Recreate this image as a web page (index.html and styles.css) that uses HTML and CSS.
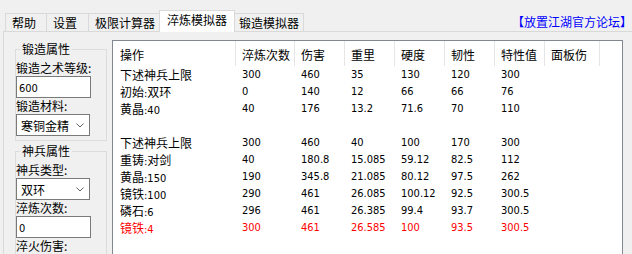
FILE: index.html
```html
<!DOCTYPE html>
<html lang="zh-CN">
<head>
<meta charset="utf-8">
<title>淬炼模拟器</title>
<link rel="stylesheet" href="styles.css">
</head>
<body>
<div class="tabbar">
  <div class="tabs">
    <div class="tab tab-help">帮助</div>
    <div class="tab tab-settings">设置</div>
    <div class="tab tab-limit">极限计算器</div>
    <div class="tab tab-active">淬炼模拟器</div>
    <div class="tab tab-forge">锻造模拟器</div>
  </div>
  <a class="forum-link">【放置江湖官方论坛】</a>
</div>
<div class="pane">
  <div class="side">
    <fieldset class="group">
      <legend>锻造属性</legend>
      <div class="label">锻造之术等级:</div>
      <div class="field"><span class="n">600</span></div>
      <div class="label">锻造材料:</div>
      <div class="select"><span>寒铜金精</span><svg class="chev" width="8" height="5" viewBox="0 0 8 5"><polyline points="0.5,0.5 4,4 7.5,0.5" fill="none" stroke="#606060" stroke-width="1"/></svg></div>
    </fieldset>
    <fieldset class="group">
      <legend>神兵属性</legend>
      <div class="label">神兵类型:</div>
      <div class="select"><span>双环</span><svg class="chev" width="8" height="5" viewBox="0 0 8 5"><polyline points="0.5,0.5 4,4 7.5,0.5" fill="none" stroke="#606060" stroke-width="1"/></svg></div>
      <div class="label">淬炼次数:</div>
      <div class="field"><span class="n">0</span></div>
      <div class="label">淬火伤害:</div>
      <div class="field"></div>
    </fieldset>
  </div>
  <div class="listbox">
    <div class="row head">
      <div class="cell">操作</div>
      <div class="cell">淬炼次数</div>
      <div class="cell">伤害</div>
      <div class="cell">重里</div>
      <div class="cell">硬度</div>
      <div class="cell">韧性</div>
      <div class="cell">特性值</div>
      <div class="cell">面板伤</div>
    </div>
    <div class="row">
      <div class="cell">下述神兵上限</div>
      <div class="cell n">300</div><div class="cell n">460</div><div class="cell n">35</div><div class="cell n">130</div><div class="cell n">120</div><div class="cell n">300</div><div class="cell"></div>
    </div>
    <div class="row">
      <div class="cell">初始<span class="n">:</span>双环</div>
      <div class="cell n">0</div><div class="cell n">140</div><div class="cell n">12</div><div class="cell n">66</div><div class="cell n">66</div><div class="cell n">76</div><div class="cell"></div>
    </div>
    <div class="row">
      <div class="cell">黄晶<span class="n">:40</span></div>
      <div class="cell n">40</div><div class="cell n">176</div><div class="cell n">13.2</div><div class="cell n">71.6</div><div class="cell n">70</div><div class="cell n">110</div><div class="cell"></div>
    </div>
    <div class="row">
      <div class="cell"></div>
    </div>
    <div class="row">
      <div class="cell">下述神兵上限</div>
      <div class="cell n">300</div><div class="cell n">460</div><div class="cell n">40</div><div class="cell n">100</div><div class="cell n">170</div><div class="cell n">300</div><div class="cell"></div>
    </div>
    <div class="row">
      <div class="cell">重铸<span class="n">:</span>对剑</div>
      <div class="cell n">40</div><div class="cell n">180.8</div><div class="cell n">15.085</div><div class="cell n">59.12</div><div class="cell n">82.5</div><div class="cell n">112</div><div class="cell"></div>
    </div>
    <div class="row">
      <div class="cell">黄晶<span class="n">:150</span></div>
      <div class="cell n">190</div><div class="cell n">345.8</div><div class="cell n">21.085</div><div class="cell n">80.12</div><div class="cell n">97.5</div><div class="cell n">262</div><div class="cell"></div>
    </div>
    <div class="row">
      <div class="cell">镜铁<span class="n">:100</span></div>
      <div class="cell n">290</div><div class="cell n">461</div><div class="cell n">26.085</div><div class="cell n">100.12</div><div class="cell n">92.5</div><div class="cell n">300.5</div><div class="cell"></div>
    </div>
    <div class="row">
      <div class="cell">磷石<span class="n">:6</span></div>
      <div class="cell n">296</div><div class="cell n">461</div><div class="cell n">26.385</div><div class="cell n">99.4</div><div class="cell n">93.7</div><div class="cell n">300.5</div><div class="cell"></div>
    </div>
    <div class="row row-last">
      <div class="cell">镜铁<span class="n">:4</span></div>
      <div class="cell n">300</div><div class="cell n">461</div><div class="cell n">26.585</div><div class="cell n">100</div><div class="cell n">93.5</div><div class="cell n">300.5</div><div class="cell"></div>
    </div>
  </div>
</div>
</body>
</html>
```
FILE: styles.css
```css
* { box-sizing: border-box; }
html, body { margin: 0; padding: 0; }
body {
  width: 632px;
  height: 254px;
  overflow: hidden;
  background: #f0f0f0;
  font-family: "Noto Sans CJK SC", sans-serif;
  font-size: 12px;
  color: #000;
}
.n {
  font-family: "DejaVu Sans Condensed", "DejaVu Sans", sans-serif;
  font-size: 11px;
}

/* tab strip */
.tabbar {
  height: 31px;
  display: flex;
  justify-content: space-between;
  align-items: flex-end;
  padding-left: 5px;
}
.tabs { display: flex; align-items: flex-end; }
.tab {
  height: 18px;
  line-height: 17px;
  padding-left: 6px;
  border: 1px solid #d9d9d9;
  border-bottom: none;
  margin-right: -1px;
  background: #f0f0f0;
  white-space: nowrap;
}
.tab-help { width: 42px; }
.tab-settings { width: 43px; }
.tab-limit { width: 74px; }
.tab-active {
  width: 76px;
  height: 22px;
  line-height: 16px;
  padding-top: 1px;
  padding-left: 7px;
  margin-left: -2px;
  margin-right: -3px;
  margin-bottom: -1px;
  background: #fff;
  position: relative;
  z-index: 2;
}
.tab-forge { width: 72px; }
.forum-link {
  align-self: flex-start;
  margin-top: 14px;
  line-height: 16px;
  color: #0000ff;
  text-decoration: none;
  white-space: nowrap;
}

/* tab page */
.pane {
  display: flex;
  align-items: flex-start;
  margin-left: 3px;
  height: 223px;
  overflow: hidden;
  border-top: 1px solid #d9d9d9;
  border-left: 1px solid #d9d9d9;
}
.side {
  width: 108px;
  flex: none;
  padding-left: 11px;
  padding-top: 9px;
}
.group {
  width: 92px;
  margin: 0;
  padding: 3px 0 4px 0;
  border: 1px solid #dcdcdc;
  min-inline-size: 0;
}
.group + .group { margin-top: 2px; }
.group legend {
  margin-left: 4px;
  padding: 0 2px;
  line-height: 16px;
}
.label { line-height: 16px; white-space: nowrap; }
.field {
  width: 75px;
  height: 22px;
  border: 1px solid #7a7a7a;
  background: #fff;
  padding-left: 2px;
  line-height: 20px;
}
.select {
  width: 74px;
  height: 22px;
  border: 1px solid #7a7a7a;
  background: #fff;
  display: flex;
  align-items: center;
  justify-content: space-between;
  padding: 0 5px 0 4px;
}
.chev { display: block; margin-top: 1px; }

/* list view */
.listbox {
  margin-top: 8px;
  width: 511px;
  height: 240px;
  border: 1px solid #828790;
  background: #fff;
  overflow: hidden;
  flex: none;
}
.row {
  display: grid;
  grid-template-columns: 123px 59px 50px 50px 50px 50px 50px 55px;
  height: 17px;
  line-height: 17px;
}
.cell {
  padding-left: 6px;
  white-space: nowrap;
  overflow: hidden;
}
.row .cell:first-child { padding-left: 7px; }
.head { height: 25px; line-height: 22px; }
.head .cell {
  padding-top: 3px;
  box-shadow: inset -1px 0 0 #e5e5e5;
}
.row-last { color: #ff0000; }
```
